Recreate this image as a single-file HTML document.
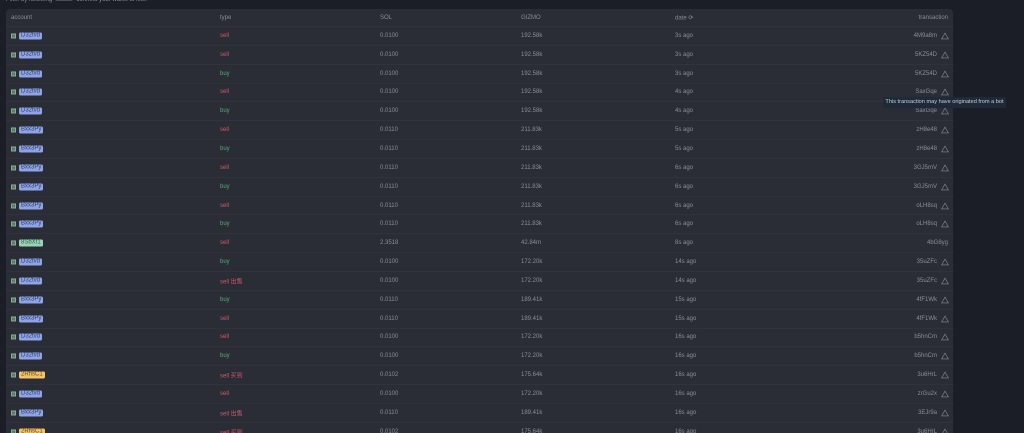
<!DOCTYPE html>
<html style="width:1024px;height:433px;overflow:hidden"><head><style>
body{margin:0;width:1024px;height:433px;overflow:hidden;background:#1c1e27;font-family:"Liberation Sans","Noto Sans CJK SC",sans-serif;color:#8b8e98;font-size:6px;position:relative}
.top{position:absolute;left:6px;top:-3px;font-size:6px;color:#8b8e98}
.tg{display:inline-block;width:18px;height:4px;background:#4b4e58;border-radius:2px;vertical-align:middle;margin:0 3px}
.panel{position:absolute;left:6px;top:9px;width:947px;height:424px;background:#2a2c36;border-radius:4px 4px 0 0;overflow:hidden}
.row{position:relative;height:18.85px;border-bottom:1px solid #30323c;box-sizing:border-box}
.row span{position:absolute;top:50%;transform:translateY(-50%);white-space:nowrap}
.hd{height:18px}
.a{left:5px}.t{left:214px}.s{left:374px}.g{left:515px}.d{left:669px}.x{right:16px}
.ic{display:inline-block;width:5px;height:5px;background:#5a7d62;border:0.5px solid #8a9;vertical-align:middle;margin-right:3px;box-sizing:border-box}
.tag{display:inline-block;padding:0 2px;height:7px;line-height:7px;border-radius:1.5px;background:#8ea4e6;color:#33406a;vertical-align:middle;font-style:normal;font-size:6px;min-width:16px}
.gr{background:#9bd3b5;color:#2f6a4a}.ye{background:#f0c36c;color:#6a4c12}
.sell{color:#d25a6c}.buy{color:#4fae74}
.w{position:absolute;right:4px;top:50%;transform:translateY(-50%)}
.tip{position:absolute;left:883px;top:97px;width:123px;height:11px;background:#1f2a38;border-radius:2px;color:#c8ccd4;font-size:5.6px;line-height:11px;text-align:center}
</style></head><body>
<div class="top">Filter by following<span class="tg"></span>connect your wallet to filter</div>
<div class="panel">
<div class="row hd"><span class="a">account</span><span class="t">type</span><span class="s">SOL</span><span class="g">GIZMO</span><span class="d">date ⟳</span><span style="right:5px">transaction</span></div>
<div id="rows"></div>
</div>
<div class="tip">This transaction may have originated from a bot</div>
<script>
var d=[["D32tvd","","sell","0.0100","192.58k","3s","4M9a8m"],["D32tvd","","sell","0.0100","192.58k","3s","5KZ54D"],["D32tvd","","buy","0.0100","192.58k","3s","5KZ54D"],["D32tvd","","sell","0.0100","192.58k","4s","SaxGqe"],["D32tvd","","buy","0.0100","192.58k","4s","SaxGqe"],["Bxx3Py","","sell","0.0110","211.83k","5s","zH8e48"],["Bxx3Py","","buy","0.0110","211.83k","5s","zH8e48"],["Bxx3Py","","sell","0.0110","211.83k","6s","3GJ5mV"],["Bxx3Py","","buy","0.0110","211.83k","6s","3GJ5mV"],["Bxx3Py","","sell","0.0110","211.83k","6s","oLH8sq"],["Bxx3Py","","buy","0.0110","211.83k","6s","oLH8sq"],["8SbXf1","gr","sell","2.3518","42.84m","8s","4bG8yg"],["D32tvd","","buy","0.0100","172.20k","14s","35uZFc"],["D32tvd","","sell 出售","0.0100","172.20k","14s","35uZFc"],["Bxx3Py","","buy","0.0110","189.41k","15s","4fF1Wk"],["Bxx3Py","","sell","0.0110","189.41k","15s","4fF1Wk"],["D32tvd","","sell","0.0100","172.20k","16s","b5hnCm"],["D32tvd","","buy","0.0100","172.20k","16s","b5hnCm"],["2RhsC1","ye","sell 买到","0.0102","175.64k","16s","3u6HrL"],["D32tvd","","sell","0.0100","172.20k","16s","zrGu2x"],["Bxx3Py","","sell 出售","0.0110","189.41k","16s","3EJr9a"],["2RhsC1","ye","sell 买到","0.0102","175.64k","16s","3u6HrL"]];
var h="";d.forEach(function(r){var bot=r[1]!="gr";var tri='<svg class="w" width="8" height="7" viewBox="0 0 8 7"><path d="M4 0.6L7.4 6.4H0.6Z" fill="none" stroke="#8b8e98" stroke-width="0.6"/></svg>';
h+='<div class="row"><span class="a"><i class="ic"></i><i class="tag '+r[1]+'">'+r[0]+'</i></span><span class="t '+(r[2].indexOf("buy")==0?"buy":"sell")+'">'+r[2]+'</span><span class="s">'+r[3]+'</span><span class="g">'+r[4]+'</span><span class="d">'+r[5]+' ago</span><span class="x"'+(bot?'':' style="right:5px"')+'>'+r[6]+'</span>'+(bot?tri:'')+'</div>';});
document.getElementById("rows").innerHTML=h;
</script>
</body></html>
